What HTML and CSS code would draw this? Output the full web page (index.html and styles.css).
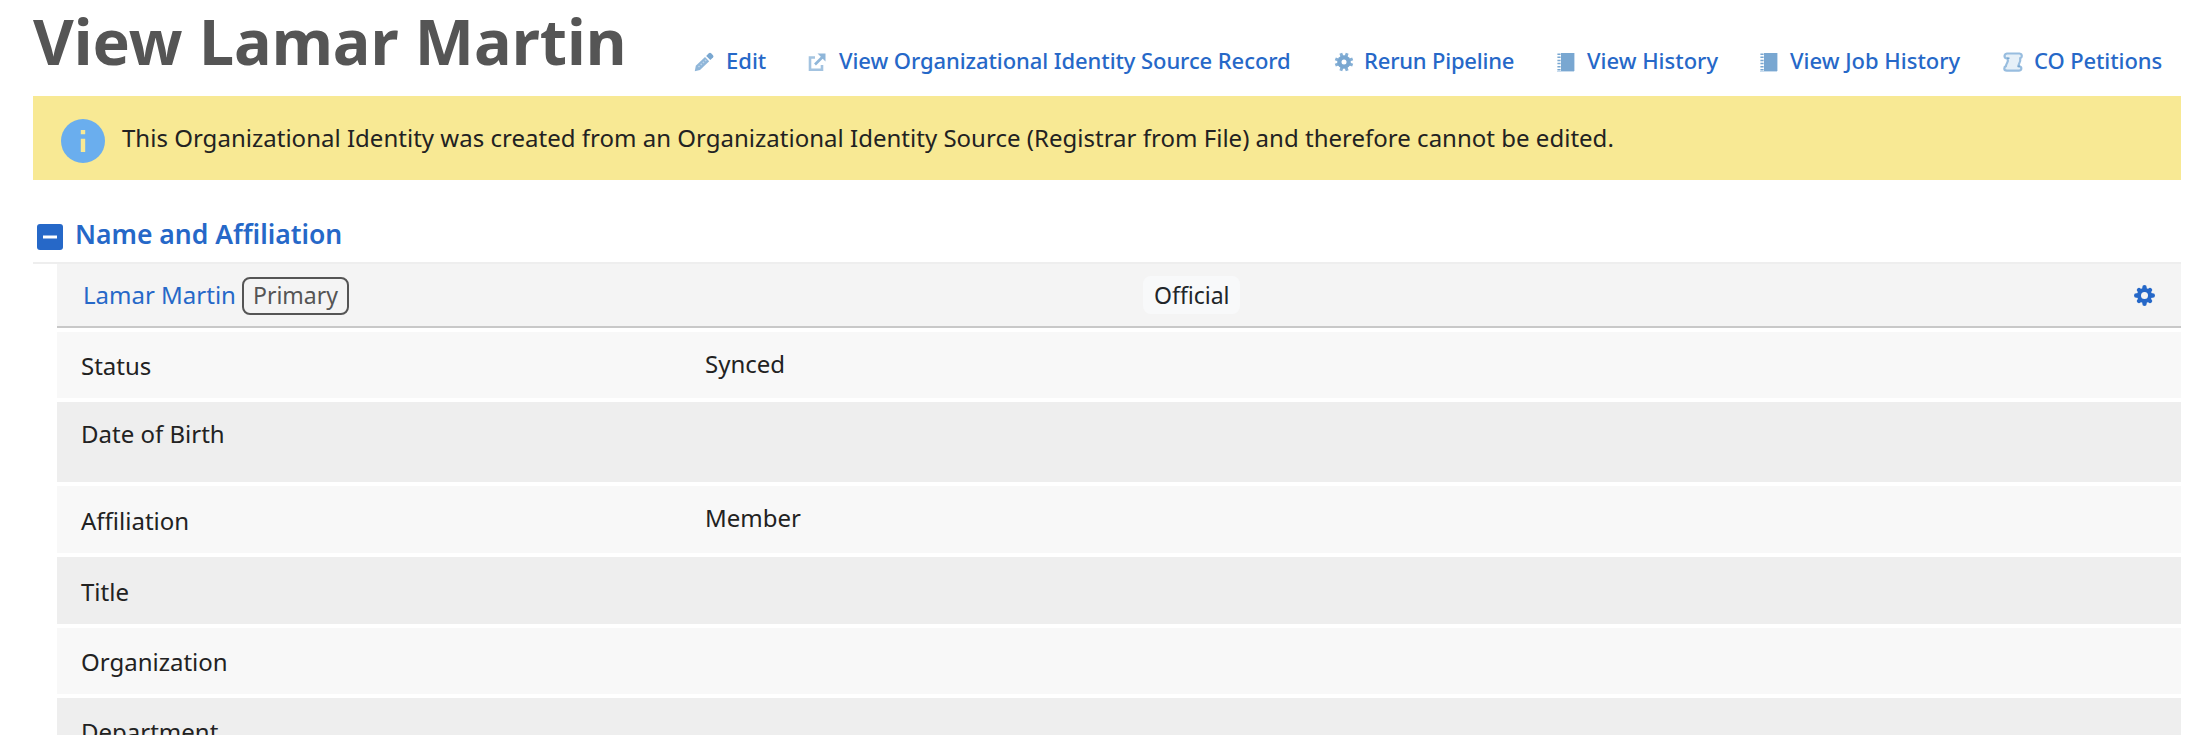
FILE: index.html
```html
<!DOCTYPE html>
<html lang="en">
<head>
<meta charset="utf-8">
<title>View Lamar Martin</title>
<link rel="stylesheet" href="styles.css">
</head>
<body>
<header class="page-head">
  <h1 class="page-title">View Lamar Martin</h1>
  <nav class="actions">
    <a class="action edit"><svg class="icon" width="20" height="20" viewBox="0 0 20 20"><path d="M.8 19.200l1-5.400L11 5l4.200 4.200L6 18z" fill="#8fb6d9"/><path d="M12.200 4l2.600-2.700q1.200-1 2.300 0l1.900 1.900q1 1.200 0 2.200L16.300 8z" fill="#79a7d1"/><path d="M4.500 15l8-7.500" stroke="#bcd4ea" stroke-width="1.600" stroke-dasharray="1.500 1.500"/></svg><span>Edit</span></a>
    <a class="action source"><svg class="icon" width="20" height="20" viewBox="0 0 20 20"><path d="M8 5.500H3v12.200h12V13" fill="none" stroke="#a3c3e0" stroke-width="2.600"/><path d="M8 12.500L16 4.500" stroke="#8fb6d9" stroke-width="2.600"/><path d="M10.500 1.500H18.500v8l-2.800-2.800-2.400-2.400z" fill="#8fb6d9"/></svg><span>View Organizational Identity Source Record</span></a>
    <a class="action rerun"><svg class="icon" width="20" height="20" viewBox="0 0 20 20"><g stroke="#86b0d6" stroke-width="3"><path d="M6.800 1.300l6.400 17.400M13.200 1.300L6.800 18.700M1.300 6.800l17.400 6.400M18.700 6.800L1.300 13.200"/></g><circle cx="10" cy="10" r="6.800" fill="#79a7d1"/><circle cx="10" cy="10" r="2.500" fill="#fff"/></svg><span>Rerun Pipeline</span></a>
    <a class="action history"><svg class="icon" width="20" height="20" viewBox="0 0 20 20"><path d="M5 1h13v18H5z" fill="#79a7d1"/><path d="M3 1.500v17" stroke="#79a7d1" stroke-width="3.200" stroke-dasharray="1.500 1.600"/><path d="M1 19.500h17M18.500 1v18" stroke="#c9dcee"/></svg><span>View History</span></a>
    <a class="action jobs"><svg class="icon" width="20" height="20" viewBox="0 0 20 20"><path d="M5 1h13v18H5z" fill="#79a7d1"/><path d="M3 1.500v17" stroke="#79a7d1" stroke-width="3.200" stroke-dasharray="1.500 1.600"/><path d="M1 19.500h17M18.500 1v18" stroke="#c9dcee"/></svg><span>View Job History</span></a>
    <a class="action petitions"><svg class="icon" width="20" height="20" viewBox="0 0 20 20"><path d="M4 1.500h12.500q2.300.3 2.300 2.500 0 1.800-1.600 2.300.5 2.700-1 5.200-.8 1.500-.5 2.800 2.300-.2 2.600 1.700.3 2.300-2.300 2.700H4q-2.700-.2-2.700-2.300 0-1.700 1.600-2.300.2-1.500 1.300-3.300 1.200-2 .3-4.300Q1.800 6.700 1.500 4.200 1.500 2 4 1.500z" fill="#e6f0f8" stroke="#98bddf" stroke-width="2.200"/><path d="M4 6.300h2.500M14.500 14.300h2.500" stroke="#79a7d1" stroke-width="1.600"/></svg><span>CO Petitions</span></a>
  </nav>
</header>
<main class="content">
  <div class="notice">
    <svg class="info" width="44" height="44" viewBox="0 0 44 44"><circle cx="22" cy="22" r="22" fill="#6aaeee"/><path d="M19.800 11h4.400v4.300h-4.400zM19.800 19.700h4.400V33h-4.400z" fill="#f8e994"/></svg>
    <span class="notice-text">This Organizational Identity was created from an Organizational Identity Source (Registrar from File) and therefore cannot be edited.</span>
  </div>
  <section>
    <div class="section-head">
      <svg class="toggle" width="26" height="26" viewBox="0 0 26 26"><rect width="26" height="26" rx="3" fill="#2668c8"/><path d="M6 13h14" stroke="#fff" stroke-width="3"/></svg>
      <h2 class="section-title">Name and Affiliation</h2>
    </div>
    <div class="fields">
      <div class="name-row">
        <a class="name">Lamar Martin</a>
        <span class="badge primary">Primary</span>
        <span class="badge official">Official</span>
        <svg class="cog" width="21" height="21" viewBox="0 0 21 21"><g stroke="#2668c8" stroke-width="4.400" stroke-linecap="round"><path d="M10.500 2.200v16.600M2.200 10.500h16.600M5 5l11 11M16 5L5 16"/></g><circle cx="10.500" cy="10.500" r="7.500" fill="#2668c8"/><circle cx="10.500" cy="10.500" r="3.500" fill="#f4f4f4"/></svg>
      </div>
      <div class="row status"><span class="label">Status</span><span class="value">Synced</span></div>
      <div class="row shaded birth"><span class="label">Date of Birth</span></div>
      <div class="row tall affiliation"><span class="label">Affiliation</span><span class="value">Member</span></div>
      <div class="row shaded tall"><span class="label">Title</span></div>
      <div class="row organization"><span class="label">Organization</span></div>
      <div class="row shaded"><span class="label">Department</span></div>
    </div>
  </section>
</main>
</body>
</html>
```
FILE: styles.css
```css
html, body { margin: 0; height: 735px; overflow: hidden; background: #fff; }
body { font: 24px/32px "Noto Sans", sans-serif; color: #222; }
h1, h2 { margin: 0; }
svg { display: block; flex: none; }
span, a, h1, h2 { white-space: nowrap; }
.page-head { display: flex; height: 96px; padding-left: 33px; box-sizing: border-box; }
.page-title { width: 661px; flex: none; font-size: 62.8px; line-height: 81px; font-weight: 700; color: #555; }
.actions { display: flex; padding-top: 44px; }
.action { display: flex; flex: none; color: #2668c8; font-size: 22px; font-weight: 500; }
.icon { margin-top: 8px; margin-right: 12px; }
.edit { width: 113px; }
.source { width: 527px; letter-spacing: -0.08px; }
.rerun { width: 222px; letter-spacing: -0.2px; }
.rerun .icon { margin-right: 10px; }
.history { width: 203px; }
.history .icon, .jobs .icon, .petitions .icon { margin-right: 11px; }
.jobs { width: 244px; }
.petitions { letter-spacing: -0.1px; }
.content { padding: 0 25px 0 33px; }
.notice { display: flex; height: 84px; background: #f8e994; }
.info { margin: 23px 17px 0 28px; }
.notice-text { padding-top: 26px; letter-spacing: 0.015px; }
.section-head { display: flex; height: 82px; border-bottom: 2px solid #eee; }
.toggle { margin: 44px 12px 0 4px; }
.section-title { padding-top: 38px; font-size: 26.500px; font-weight: 600; color: #2668c8; }
.fields { padding-left: 24px; }
.name-row { display: flex; height: 62px; padding-left: 26px; background: #f4f4f4; border-bottom: 2px solid #c8c8c8; margin-bottom: 4px; }
.name { width: 159px; padding-top: 15px; color: #2668c8; }
.badge { box-sizing: border-box; height: 38px; border-radius: 8px; font-size: 23px; }
.primary { width: 107px; margin-top: 13px; padding: 0 9px; line-height: 33px; border: 2px solid #555; color: #555; }
.official { width: 97px; margin: 12px 0 0 794px; padding: 3px 11px; background: #f8f9fa; color: #212529; }
.cog { margin: 21px 0 0 894px; }
.row { display: flex; box-sizing: border-box; height: 66px; padding: 18px 0 0 24px; margin-bottom: 4px; background: #f8f8f8; }
.shaded { background: #eee; }
.tall { height: 67px; padding-top: 19px; }
.birth { height: 80px; padding-top: 16px; }
.label { width: 624px; }
.status .value { margin-top: -2px; }
.affiliation .value { margin-top: -3px; }
```
